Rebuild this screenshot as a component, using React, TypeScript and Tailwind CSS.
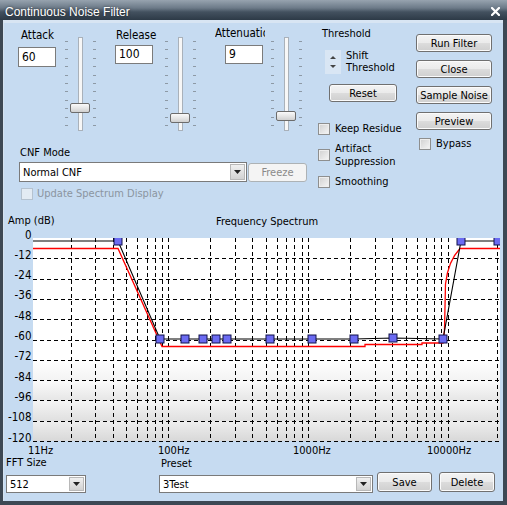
import React from 'react';

const SVG_FONT = "'DejaVu Sans Condensed','DejaVu Sans',sans-serif";

const BTN =
  'flex items-center justify-center rounded-[3px] border border-[#707070] bg-[linear-gradient(to_bottom,#f3f3f3_0%,#ebebeb_48%,#dcdcdc_52%,#cfcfcf_100%)] shadow-[inset_0_0_0_1px_#fbfbfb] text-black';

function Button({ label, className = '' }: { label: string; className?: string }) {
  return <div className={`${BTN} ${className}`}>{label}</div>;
}

function Check({ disabled = false }: { disabled?: boolean }) {
  return (
    <span
      className={`block h-[12px] w-[12px] shrink-0 border ${
        disabled
          ? 'border-[#b5c2cf] bg-[#e3ebf3]'
          : 'border-[#8e8f8f] bg-[linear-gradient(135deg,#d0d0d0,#f6f6f6)] shadow-[inset_0_0_0_1px_#eeeeee]'
      }`}
    />
  );
}

function TextBox({ value, className = '' }: { value: string; className?: string }) {
  return (
    <div className={`flex items-center border border-[#7b7b7b] bg-white pl-[3px] text-[12px] ${className}`}>
      {value}
    </div>
  );
}

function Combo({ value, className = '' }: { value: string; className?: string }) {
  return (
    <div className={`flex items-stretch border border-[#7a7a7a] bg-white ${className}`}>
      <span className="flex flex-1 items-center pl-[3px]">{value}</span>
      <span className="m-px flex w-[15px] items-center justify-center border border-[#b8b8b8] bg-[linear-gradient(to_bottom,#f0f0f0,#d2d2d2)]">
        <svg width="7" height="4" viewBox="0 0 7 4">
          <path d="M0 0H7L3.5 4Z" fill="#222" />
        </svg>
      </span>
    </div>
  );
}

// vertical trackbar: ticks on both sides, thumb over the track
function Slider({ thumb }: { thumb: string }) {
  const ticks = Array.from({ length: 11 });
  return (
    <div className="relative h-[94px] w-[34px]">
      <div className="absolute left-[2px] top-[4px] flex h-[85px] flex-col justify-between">
        {ticks.map((_, i) => (
          <span key={i} className="block h-px w-[3px] bg-[#8d99a5]" />
        ))}
      </div>
      <div className="absolute left-[30px] top-[4px] flex h-[85px] flex-col justify-between">
        {ticks.map((_, i) => (
          <span key={i} className="block h-px w-[3px] bg-[#8d99a5]" />
        ))}
      </div>
      <div className="absolute left-[15px] top-0 h-full w-[5px] border border-[#a9b1ba] bg-[#f7f7f7]" />
      <div
        className={`absolute left-[7px] h-[10px] w-[20px] rounded-[2px] border border-[#6c6c6c] bg-[linear-gradient(to_bottom,#fafafa,#e6e6e6_50%,#d0d0d0)] ${thumb}`}
      />
    </div>
  );
}

const xf = (f: number) => 168.3 + (Math.log10(f) - 2) * 139.7;

function Spectrum() {
  const top = 238;
  const step = 20.3;
  const freqs: number[] = [];
  [10, 100, 1000].forEach((d) => {
    for (let m = 2; m <= 10; m++) freqs.push(m * d);
  });
  const vx = [...freqs.map((f) => Math.round(xf(f)) + 0.5), 497.5];
  const hy = Array.from({ length: 10 }, (_, i) => Math.round(top + (i + 1) * step) + 0.5);
  const labels = Array.from({ length: 11 }, (_, i) => ({ t: i === 0 ? '0' : `-${i * 12}`, y: top + i * step + 0.5 }));
  const nodes: [number, number][] = [
    [118, 241], [160, 339], [185, 339], [203, 339], [216, 339], [227, 339],
    [270, 339], [312, 339], [354, 339], [393, 338], [443, 339], [461, 241], [498, 241],
  ];

  return (
    <svg width="499" height="217" viewBox="4 228 499 217" className="block">
      <defs>
        <linearGradient id="b1" x1="0" y1="0" x2="0" y2="1">
          <stop offset="0" stopColor="#ffffff" />
          <stop offset="1" stopColor="#f3f3f3" />
        </linearGradient>
        <linearGradient id="b2" x1="0" y1="0" x2="0" y2="1">
          <stop offset="0" stopColor="#fbfbfb" />
          <stop offset="1" stopColor="#e6e6e6" />
        </linearGradient>
        <linearGradient id="b3" x1="0" y1="0" x2="0" y2="1">
          <stop offset="0" stopColor="#f5f5f5" />
          <stop offset="1" stopColor="#dfdfdf" />
        </linearGradient>
        <linearGradient id="b4" x1="0" y1="0" x2="0" y2="1">
          <stop offset="0" stopColor="#eeeeee" />
          <stop offset="1" stopColor="#d8d8d8" />
        </linearGradient>
        <clipPath id="plot">
          <rect x="33" y="238" width="467" height="203" />
        </clipPath>
      </defs>

      <rect x="33" y="238" width="467" height="203" fill="#fff" />
      <rect x="33" y={hy[5]} width="467" height={hy[6] - hy[5]} fill="url(#b1)" />
      <rect x="33" y={hy[6]} width="467" height={hy[7] - hy[6]} fill="url(#b2)" />
      <rect x="33" y={hy[7]} width="467" height={hy[8] - hy[7]} fill="url(#b3)" />
      <rect x="33" y={hy[8]} width="467" height={441 - hy[8]} fill="url(#b4)" />

      <g stroke="#000" strokeWidth="1" strokeDasharray="4 3" shapeRendering="crispEdges">
        {hy.map((y) => (
          <line key={y} x1="33" x2="500" y1={y} y2={y} />
        ))}
        {vx.map((x) => (
          <line key={x} x1={x} x2={x} y1="238" y2="441" />
        ))}
      </g>

      <g clipPath="url(#plot)">
        <polyline
          points="33,248.5 118,248.5 162,346.5 365,346.5 365,344.5 422,344.5 422,343 443,343 444.5,330"
          fill="none"
          stroke="#ff0000"
          strokeWidth="1.3"
        />
        <path d="M444.5 330 L445.5 284 C447 270 451 258 460 248.5 L500 248.5" fill="none" stroke="#ff0000" strokeWidth="1.3" />
        <polyline
          points="33,241 118,241 160,339 354,339 393,338 443,339 461,241 500,241"
          fill="none"
          stroke="#000"
          strokeWidth="1.1"
        />
        {nodes.map(([x, y]) => (
          <rect key={x} x={x - 4} y={y - 4} width="8" height="8" fill="#6b6bf2" stroke="#10104a" strokeWidth="1" />
        ))}
      </g>

      <g fontFamily={SVG_FONT} fontSize="11.5" fill="#000">
        {labels.map((l) => (
          <text key={l.t} x="31.5" y={l.y} textAnchor="end">
            {l.t}
          </text>
        ))}
      </g>
    </svg>
  );
}

export default function App() {
  return (
    <div className="flex h-[505px] w-[507px] flex-col bg-[#3d4854]">
      {/* title bar */}
      <div className="flex h-[20px] shrink-0 items-center justify-between bg-[linear-gradient(to_bottom,#97a3af,#6c7a88_40%,#43515f_60%,#2d3a47)] pl-[5px] pr-[7px] pt-[3px] font-['Liberation_Sans',sans-serif] text-[12px] leading-none text-white [text-shadow:0_0_3px_rgba(0,0,0,0.6)]">
        <span>Continuous Noise Filter</span>
        <svg width="9" height="9" viewBox="0 0 9 9" className="-mt-[1px]">
          <path d="M1 1L8 8M8 1L1 8" stroke="#fff" strokeWidth="2.2" strokeLinecap="square" />
        </svg>
      </div>

      {/* dialog body */}
      <div className="mb-[4px] ml-[3px] mr-[4px] flex flex-1 flex-col border-l border-t-[3px] border-l-[#d5e2ef] border-t-[#d8e5f3] bg-[#c6dbf1] font-['DejaVu_Sans_Condensed','DejaVu_Sans',sans-serif] text-[11px] leading-[13px] text-black [font-stretch:condensed]">
        <div className="flex h-[177px] shrink-0">
          {/* sliders + mode */}
          <div className="ml-[14px] flex w-[289px] flex-col">
            <div className="flex h-[108px] items-start">
              <div className="mt-[6px] flex w-[38px] flex-col">
                <span className="pl-[3px] text-[11.5px]">Attack</span>
                <TextBox value="60" className="mt-[5px] h-[20px]" />
              </div>
              <div className="ml-[7px] mt-[14px]">
                <Slider thumb="top-[66px]" />
              </div>
              <div className="ml-[18px] mt-[6px] flex w-[38px] flex-col">
                <span className="pl-px text-[11.5px]">Release</span>
                <TextBox value="100" className="mt-[3px] h-[19px]" />
              </div>
              <div className="ml-[10px] mt-[14px]">
                <Slider thumb="top-[76px]" />
              </div>
              <div className="ml-[18px] mt-[4px] flex w-[50px] flex-col">
                <span className="overflow-hidden whitespace-nowrap text-[11.5px]">Attenuation</span>
                <TextBox value="9" className="ml-[10px] mt-[5px] h-[19px] w-[38px]" />
              </div>
              <div className="ml-[4px] mt-[14px]">
                <Slider thumb="top-[74px]" />
              </div>
            </div>

            <span className="mt-[15px] pl-[2px]">CNF Mode</span>
            <div className="mt-[3px] flex h-[20px]">
              <Combo value="Normal CNF" className="ml-px h-[20px] w-[228px]" />
              <div className="ml-[1px] mt-px flex h-[19px] w-[59px] items-center justify-center rounded-[3px] border border-[#adb2b5] bg-[#f4f4f4] text-[#8a8a8a]">
                Freeze
              </div>
            </div>
            <div className="ml-[3px] mt-[5px] flex items-center">
              <Check disabled />
              <span className="ml-[4px] text-[#8b95a0]">Update Spectrum Display</span>
            </div>
          </div>

          {/* threshold + options */}
          <div className="ml-[11px] flex w-[86px] flex-col">
            <span className="mt-[4px] pl-[4px]">Threshold</span>
            <div className="mt-[10px] flex items-center">
              <div className="ml-[7px] flex h-[24px] w-[16px] flex-col items-center justify-center gap-[6px] bg-[#d9e6f4]">
                <svg width="6" height="3" viewBox="0 0 6 3">
                  <path d="M0 3H6L3 0Z" fill="#444" />
                </svg>
                <svg width="6" height="3" viewBox="0 0 6 3">
                  <path d="M0 0H6L3 3Z" fill="#444" />
                </svg>
              </div>
              <span className="ml-[5px] leading-[12px]">
                Shift
                <br />
                Threshold
              </span>
            </div>
            <Button label="Reset" className="ml-[11px] mt-[10px] h-[18px] w-[68px]" />
            <div className="mt-[20px] flex items-center">
              <Check />
              <span className="ml-[5px] whitespace-nowrap">Keep Residue</span>
            </div>
            <div className="mt-[7px] flex items-center">
              <Check />
              <span className="ml-[5px]">
                Artifact
                <br />
                Suppression
              </span>
            </div>
            <div className="mt-[7px] flex items-center">
              <Check />
              <span className="ml-[5px]">Smoothing</span>
            </div>
          </div>

          {/* action buttons */}
          <div className="ml-[12px] flex w-[76px] flex-col">
            <Button label="Run Filter" className="mt-[11px] h-[18px]" />
            <Button label="Close" className="mt-[8px] h-[18px]" />
            <Button label="Sample Noise" className="mt-[8px] h-[18px]" />
            <Button label="Preview" className="mt-[8px] h-[18px]" />
            <div className="ml-[3px] mt-[7px] flex items-center">
              <Check />
              <span className="ml-[5px]">Bypass</span>
            </div>
          </div>
        </div>

        {/* spectrum */}
        <div className="mt-[14px] flex h-[13px] shrink-0">
          <span className="ml-[4px] w-[208px]">Amp (dB)</span>
          <span className="mt-px">Frequency Spectrum</span>
        </div>
        <div className="mt-px shrink-0">
          <Spectrum />
        </div>
        <div className="flex h-[11px] shrink-0 leading-[11px]">
          <span className="ml-[24px] w-[130px]">11Hz</span>
          <span className="w-[135px]">100Hz</span>
          <span className="w-[134px]">1000Hz</span>
          <span>10000Hz</span>
        </div>

        {/* fft / preset */}
        <div className="flex shrink-0">
          <div className="ml-[2px] flex w-[80px] flex-col">
            <span>FFT Size</span>
            <Combo value="512" className="mt-[6px] h-[18px]" />
          </div>
          <div className="ml-[73px] flex w-[214px] flex-col">
            <span className="mt-[1px] pl-[2px]">Preset</span>
            <Combo value="3Test" className="mt-[5px] h-[18px]" />
          </div>
          <Button label="Save" className="ml-[4px] mt-[16px] h-[20px] w-[55px]" />
          <Button label="Delete" className="ml-[7px] mt-[16px] h-[20px] w-[56px]" />
        </div>
      </div>
    </div>
  );
}
